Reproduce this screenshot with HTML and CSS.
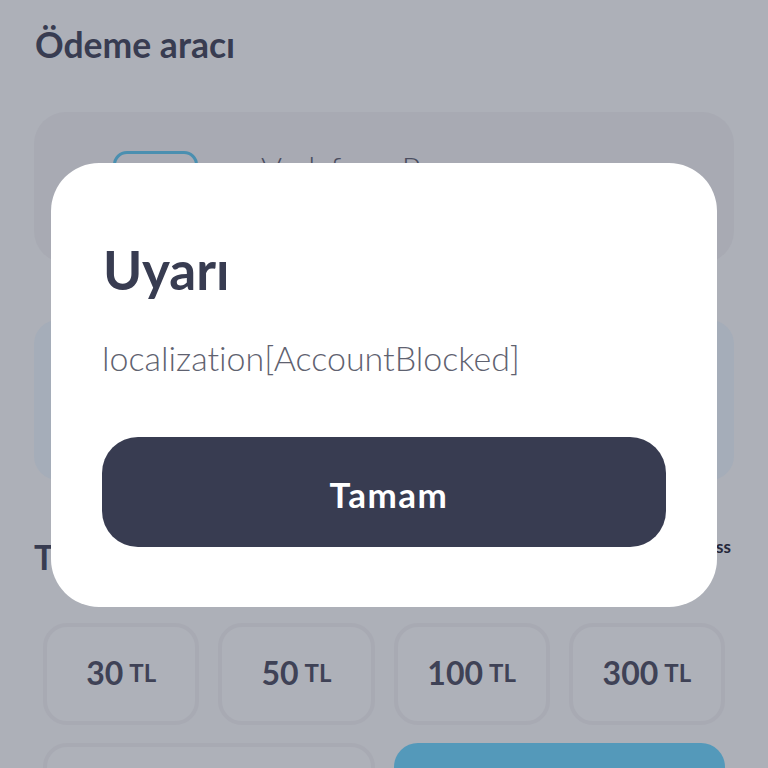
FILE: index.html
```html
<!DOCTYPE html>
<html lang="tr">
<head>
<meta charset="utf-8">
<title>Ödeme aracı</title>
<link rel="stylesheet" href="styles.css">
</head>
<body>
<main class="page">
  <h2 class="section-title">Ödeme aracı</h2>
  <section class="pay-card">
    <div class="pay-icon"></div>
    <span class="pay-name">Vodafone Pay</span>
  </section>
  <section class="info-panel"></section>
  <div class="amount-head">
    <h2 class="amount-title">Tutar</h2>
    <span class="amount-link">Vodafone Pass</span>
  </div>
  <div class="amounts">
    <button class="tile"><b>30</b> <small>TL</small></button>
    <button class="tile"><b>50</b> <small>TL</small></button>
    <button class="tile"><b>100</b> <small>TL</small></button>
    <button class="tile"><b>300</b> <small>TL</small></button>
    <div class="tile wide"></div>
    <div class="tile wide primary"></div>
  </div>
</main>
<div class="modal">
  <h1 class="modal-title">Uyarı</h1>
  <p class="modal-text">localization[AccountBlocked]</p>
  <button class="modal-btn">Tamam</button>
</div>
</body>
</html>
```
FILE: styles.css
```css
* { box-sizing: border-box; }
html, body { margin: 0; height: 768px; overflow: hidden; }
body {
  position: relative;
  background: #adb0b8;
  font-family: "Lato", "Liberation Sans", sans-serif;
  font-variant-ligatures: none;
  color: #383c51;
}
.page { height: 768px; overflow: hidden; padding: 23px 34px 0; }
.section-title { margin: 0 0 0 1px; font-size: 35.5px; line-height: 44px; font-weight: 700; }
.pay-card {
  margin-top: 45px;
  height: 151px;
  background: #a8aab3;
  border-radius: 32px;
  padding: 39px 0 0 79px;
  display: flex;
  align-items: flex-start;
  gap: 63px;
}
.pay-icon {
  width: 85px;
  height: 80px;
  border: 3px solid #4a8fb0;
  border-radius: 14px;
}
.pay-name { font-size: 32px; line-height: 34px; font-weight: 300; color: #4a4d5f; }
.info-panel {
  margin-top: 57px;
  height: 160px;
  background: #a5adb9;
  border-radius: 24px;
}
.amount-head {
  margin-top: 56px;
  height: 40px;
  display: flex;
  justify-content: space-between;
  align-items: flex-start;
}
.amount-title { margin: 0; font-size: 34px; line-height: 42px; font-weight: 700; }
.amount-link { font-size: 17px; line-height: 22px; font-weight: 700; color: #24273a; margin-right: 3px; }
.amounts {
  margin-top: 47px;
  padding: 0 9px;
  display: grid;
  grid-template-columns: repeat(4, 1fr);
  grid-auto-rows: 102px;
  gap: 18px 19px;
}
.tile {
  border: 4px solid #a8aab3;
  border-radius: 24px;
  background: #aeb1b9;
  display: flex;
  align-items: center;
  justify-content: center;
  gap: 6px;
  padding: 0 0 4px;
  font-family: inherit;
  color: #3f4256;
}
.tile b { font-size: 32px; font-weight: 700; }
.tile small { font-size: 24px; font-weight: 700; }
.wide { grid-column: span 2; }
.primary { background: #5499ba; border: 0; }
.modal {
  position: absolute;
  left: 51px;
  top: 163px;
  width: 666px;
  height: 444px;
  background: #fff;
  border-radius: 48px;
  padding: 75px 51px 0;
}
.modal-title { margin: 0 0 0 1px; font-size: 53px; line-height: 64px; font-weight: 700; color: #383c51; }
.modal-text { margin: 35px 0 0 0; font-size: 34px; line-height: 42px; font-weight: 300; color: #5f6270; }
.modal-btn {
  display: block;
  width: 564px;
  height: 110px;
  margin: 58px 0 0;
  padding: 4px 0 0 10px;
  border: 0;
  border-radius: 36px;
  background: #383c51;
  color: #fff;
  font-family: inherit;
  font-size: 35px;
  font-weight: 700;
  letter-spacing: 1.5px;
}
```
